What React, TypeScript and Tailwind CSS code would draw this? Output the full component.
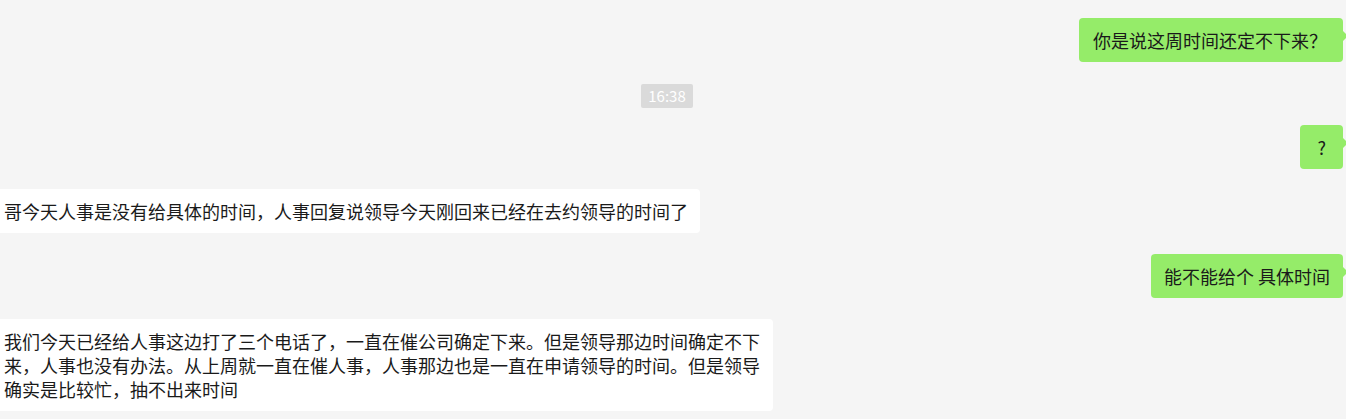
import React from "react";

const font = { fontFamily: '"Noto Sans CJK SC", "Microsoft YaHei", sans-serif' };

function Right({ text, className = "", pad = "pl-[14px] pr-[14px]" }: { text: string; className?: string; pad?: string }) {
  return (
    <div className={`flex justify-end pr-[3px] ${className}`}>
      <div className="relative">
        <div className={`rounded-[4px] bg-[#95ec69] ${pad} py-[10px] text-[18px] leading-[24px] text-[#1a1a1a] whitespace-pre`}>
          {text}
        </div>
        <div className="absolute right-[-5px] top-[13px] h-0 w-0 border-y-[5px] border-l-[5px] border-y-transparent border-l-[#95ec69]" />
      </div>
    </div>
  );
}

function Left({ text, className = "" }: { text: string; className?: string }) {
  return (
    <div className={`flex justify-start ${className}`}>
      <div className="ml-[-10px] max-w-[783px] rounded-[4px] bg-white pl-[14px] pr-[12px] py-[10px] text-[18px] leading-[24px] text-[#1a1a1a]">
        {text}
      </div>
    </div>
  );
}

export default function App() {
  return (
    <div className="h-[419px] w-[1346px] overflow-hidden bg-[#f5f5f5] pt-[18px]" style={font}>
      <div className="flex flex-col">
        <Right text="你是说这周时间还定不下来？" pad="pl-[14px] pr-[16px]" />
        <div className="mt-[22px] flex justify-center pr-[12px]">
          <div className="rounded-[2px] bg-[#dadada] px-[7px] text-[15px] leading-[24px] text-white">16:38</div>
        </div>
        <Right text="?" className="mt-[17px]" pad="pl-[17px] pr-[17px]" />
        <Left className="mt-[20px]" text="哥今天人事是没有给具体的时间，人事回复说领导今天刚回来已经在去约领导的时间了" />
        <Right text="能不能给个 具体时间" className="mt-[21px]" pad="pl-[13px] pr-[13px]" />
        <Left
          className="mt-[21px]"
          text="我们今天已经给人事这边打了三个电话了，一直在催公司确定下来。但是领导那边时间确定不下来，人事也没有办法。从上周就一直在催人事，人事那边也是一直在申请领导的时间。但是领导确实是比较忙，抽不出来时间"
        />
      </div>
    </div>
  );
}
